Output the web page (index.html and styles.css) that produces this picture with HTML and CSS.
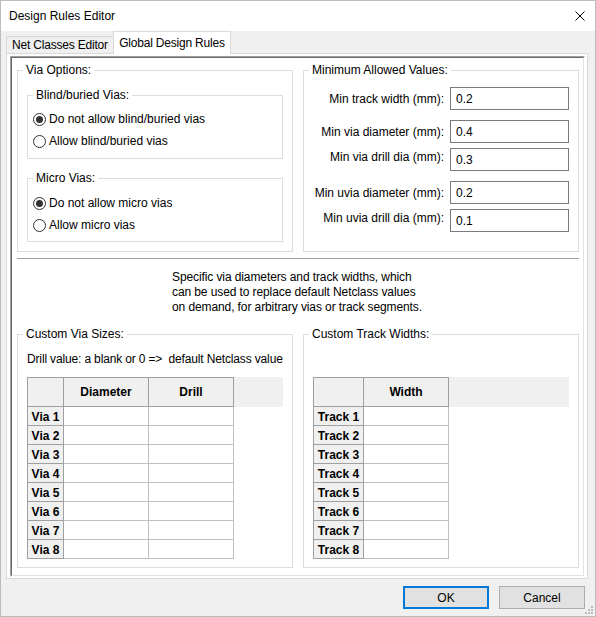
FILE: index.html
```html
<!DOCTYPE html>
<html>
<head>
<meta charset="utf-8">
<link rel="stylesheet" href="styles.css">
</head>
<body>
<div class="window">
  <div class="titlebar">
    <span class="title">Design Rules Editor</span>
    <svg class="close" width="10" height="10" viewBox="0 0 10 10"><path d="M0.5 0.5 L9.5 9.5 M9.5 0.5 L0.5 9.5" stroke="#000" stroke-width="1" fill="none"/></svg>
  </div>
  <div class="tabs">
    <div class="tab">Net Classes Editor</div>
    <div class="tab tab-active">Global Design Rules</div>
  </div>
  <div class="page">
    <div class="sunken-outer">
      <div class="sunken-inner">
        <div class="top-row">
          <fieldset class="box box-top">
            <legend>Via Options:</legend>
            <div class="via-body">
              <fieldset class="box">
                <legend>Blind/buried Vias:</legend>
                <div class="sub-body">
                  <div class="radio-row"><span class="radio on"></span><span>Do not allow blind/buried vias</span></div>
                  <div class="radio-row"><span class="radio"></span><span>Allow blind/buried vias</span></div>
                </div>
              </fieldset>
              <fieldset class="box box-micro">
                <legend>Micro Vias:</legend>
                <div class="sub-body sub-body-micro">
                  <div class="radio-row"><span class="radio on"></span><span>Do not allow micro vias</span></div>
                  <div class="radio-row"><span class="radio"></span><span>Allow micro vias</span></div>
                </div>
              </fieldset>
            </div>
          </fieldset>
          <fieldset class="box box-top">
            <legend>Minimum Allowed Values:</legend>
            <div class="min-body">
              <div class="field-row"><span class="field-label">Min track width (mm):</span><input class="field-input" type="text" value="0.2"></div>
              <div class="field-row gap-lg"><span class="field-label">Min via diameter (mm):</span><input class="field-input" type="text" value="0.4"></div>
              <div class="field-row gap-sm up"><span class="field-label">Min via drill dia (mm):</span><input class="field-input" type="text" value="0.3"></div>
              <div class="field-row gap-lg"><span class="field-label">Min uvia diameter (mm):</span><input class="field-input" type="text" value="0.2"></div>
              <div class="field-row gap-sm up"><span class="field-label">Min uvia drill dia (mm):</span><input class="field-input" type="text" value="0.1"></div>
            </div>
          </fieldset>
        </div>
        <div class="divider"></div>
        <p class="desc">Specific via diameters and track widths, which<br>can be used to replace default Netclass values<br>on demand, for arbitrary vias or track segments.</p>
        <div class="bottom-row">
          <fieldset class="box box-bottom">
            <legend>Custom Via Sizes:</legend>
            <div class="custom-body">
              <div class="note">Drill value: a blank or 0 =&gt;&nbsp; default Netclass value</div>
              <div class="grid">
                <div class="grid-head">
                  <div class="gh corner w-via"></div>
                  <div class="gh w-col">Diameter</div>
                  <div class="gh w-col">Drill</div>
                </div>
                <div class="grid-row"><div class="rl w-via">Via 1</div><div class="gc w-col"></div><div class="gc w-col"></div></div>
                <div class="grid-row"><div class="rl w-via">Via 2</div><div class="gc w-col"></div><div class="gc w-col"></div></div>
                <div class="grid-row"><div class="rl w-via">Via 3</div><div class="gc w-col"></div><div class="gc w-col"></div></div>
                <div class="grid-row"><div class="rl w-via">Via 4</div><div class="gc w-col"></div><div class="gc w-col"></div></div>
                <div class="grid-row"><div class="rl w-via">Via 5</div><div class="gc w-col"></div><div class="gc w-col"></div></div>
                <div class="grid-row"><div class="rl w-via">Via 6</div><div class="gc w-col"></div><div class="gc w-col"></div></div>
                <div class="grid-row"><div class="rl w-via">Via 7</div><div class="gc w-col"></div><div class="gc w-col"></div></div>
                <div class="grid-row"><div class="rl w-via">Via 8</div><div class="gc w-col"></div><div class="gc w-col"></div></div>
              </div>
            </div>
          </fieldset>
          <fieldset class="box box-bottom">
            <legend>Custom Track Widths:</legend>
            <div class="custom-body">
              <div class="note"></div>
              <div class="grid">
                <div class="grid-head">
                  <div class="gh corner w-track"></div>
                  <div class="gh w-col">Width</div>
                </div>
                <div class="grid-row"><div class="rl w-track">Track 1</div><div class="gc w-col"></div></div>
                <div class="grid-row"><div class="rl w-track">Track 2</div><div class="gc w-col"></div></div>
                <div class="grid-row"><div class="rl w-track">Track 3</div><div class="gc w-col"></div></div>
                <div class="grid-row"><div class="rl w-track">Track 4</div><div class="gc w-col"></div></div>
                <div class="grid-row"><div class="rl w-track">Track 5</div><div class="gc w-col"></div></div>
                <div class="grid-row"><div class="rl w-track">Track 6</div><div class="gc w-col"></div></div>
                <div class="grid-row"><div class="rl w-track">Track 7</div><div class="gc w-col"></div></div>
                <div class="grid-row"><div class="rl w-track">Track 8</div><div class="gc w-col"></div></div>
              </div>
            </div>
          </fieldset>
        </div>
      </div>
    </div>
  </div>
  <div class="buttons">
    <button class="btn btn-default">OK</button>
    <button class="btn">Cancel</button>
  </div>
  <svg class="grip" width="8" height="8" viewBox="0 0 8 8"><rect x="6" y="0" width="2" height="2"/><rect x="3" y="3" width="2" height="2"/><rect x="6" y="3" width="2" height="2"/><rect x="0" y="6" width="2" height="2"/><rect x="3" y="6" width="2" height="2"/><rect x="6" y="6" width="2" height="2"/></svg>
</div>
</body>
</html>
```
FILE: styles.css
```css
* { box-sizing: border-box; }
html, body { margin: 0; padding: 0; }
body {
  font-family: "Liberation Sans", Arial, sans-serif;
  font-size: 12px;
  color: #000;
  background: #f0f0f0;
}
.window {
  position: relative;
  width: 596px;
  height: 617px;
  border: 1px solid #bcbcbc;
  background: #f0f0f0;
  display: flex;
  flex-direction: column;
}
.titlebar {
  height: 30px;
  flex: none;
  background: #fff;
  display: flex;
  align-items: center;
  justify-content: space-between;
  padding: 0 10px 0 8px;
}
.close { display: block; }
.tabs {
  height: 22px;
  flex: none;
  display: flex;
  align-items: flex-end;
  padding-left: 5px;
}
.tab {
  height: 17px;
  width: 107px;
  border: 1px solid #d9d9d9;
  border-bottom: none;
  border-right: none;
  background: #f0f0f0;
  display: flex;
  align-items: center;
  justify-content: center;
  white-space: nowrap;
  letter-spacing: -0.2px;
}
.tab-active {
  height: 23px;
  width: 118px;
  border-right: 1px solid #d9d9d9;
  background: #fff;
  margin-bottom: -1px;
  position: relative;
  z-index: 1;
}
.page {
  height: 526px;
  flex: none;
  margin: 0 7px 0 5px;
  border: 1px solid #d9d9d9;
  background: #fff;
  padding: 2px 2px 1px 3px;
}
.sunken-outer {
  height: 100%;
  border: 1px solid;
  border-color: #a0a0a0 #fff #fff #a0a0a0;
}
.sunken-inner {
  height: 100%;
  border: 1px solid;
  border-color: #696969 #e3e3e3 #e3e3e3 #696969;
  padding: 4px 4px 0 5px;
}
.box {
  margin: 0;
  padding: 0;
  min-width: 0;
  border: 1px solid #dcdcdc;
}
.box > legend {
  padding: 0 3px;
  margin-left: 5px;
  line-height: 16px;
}
.top-row, .bottom-row {
  display: flex;
  gap: 10px;
}
.box-top, .box-bottom { width: 276px; }
.via-body { padding: 9px; }
.box-micro { margin-top: 11px; }
.sub-body { padding: 5px 5px 6px 5px; }
.sub-body-micro { padding: 6px 5px 5px 5px; }
.radio-row {
  height: 22px;
  display: flex;
  align-items: center;
  gap: 3px;
  white-space: nowrap;
}
.radio {
  flex: none;
  width: 13px;
  height: 13px;
  border: 1px solid #333;
  border-radius: 50%;
  background: #fff;
  display: flex;
  align-items: center;
  justify-content: center;
}
.radio.on::after {
  content: "";
  width: 7px;
  height: 7px;
  border-radius: 50%;
  background: #333;
}
.min-body { padding: 9px 9px 19px 1px; }
.field-row {
  display: flex;
  align-items: center;
  gap: 6px;
}
.gap-lg { margin-top: 10px; }
.gap-sm { margin-top: 5px; }
.field-label {
  flex: 1;
  text-align: right;
  line-height: 16px;
  white-space: nowrap;
}
.field-row.up .field-label {
  align-self: flex-start;
  margin-top: 1px;
}
.field-input {
  flex: none;
  width: 119px;
  height: 23px;
  margin: 0;
  border: 1px solid #7a7a7a;
  border-radius: 0;
  padding: 0 5px;
  font: inherit;
  color: #000;
  background: #fff;
  outline: none;
}
.divider {
  height: 1px;
  margin-top: 6px;
  background: #a0a0a0;
}
.desc {
  margin: 11px 0 0 155px;
  line-height: 15px;
  white-space: nowrap;
  letter-spacing: -0.1px;
}
.bottom-row { margin-top: 11px; }
.custom-body { padding: 9px 8px 8px 9px; }
.note {
  height: 16px;
  line-height: 16px;
  margin-bottom: 10px;
  white-space: nowrap;
  letter-spacing: -0.15px;
}
.grid { width: 256px; }
.grid-head {
  display: flex;
  height: 30px;
  background: #f0f0f0;
}
.gh {
  border-top: 1px solid #a0a0a0;
  border-bottom: 1px solid #a0a0a0;
  border-right: 1px solid #a0a0a0;
  display: flex;
  align-items: center;
  justify-content: center;
  font-weight: bold;
}
.gh.corner { border-left: 1px solid #a0a0a0; }
.w-via { width: 37px; }
.w-track { width: 51px; }
.w-col { width: 85px; }
.grid-row {
  display: flex;
  height: 19px;
}
.rl {
  background: #f0f0f0;
  border-left: 1px solid #a0a0a0;
  border-right: 1px solid #a0a0a0;
  border-bottom: 1px solid #a0a0a0;
  padding-top: 2px;
  display: flex;
  align-items: center;
  justify-content: center;
  font-weight: bold;
  white-space: nowrap;
}
.gc {
  background: #fff;
  border-right: 1px solid #c0c0c0;
  border-bottom: 1px solid #c0c0c0;
}
.buttons {
  flex: none;
  display: flex;
  justify-content: flex-end;
  gap: 10px;
  margin-top: 7px;
  padding-right: 10px;
}
.btn {
  width: 86px;
  height: 23px;
  margin: 0;
  padding: 0;
  background: #e1e1e1;
  border: 1px solid #adadad;
  border-radius: 0;
  font: inherit;
  color: #000;
}
.btn-default { border: 2px solid #0078d7; }
.grip {
  position: absolute;
  right: 2px;
  bottom: 2px;
  fill: #bcbcbc;
}
```
